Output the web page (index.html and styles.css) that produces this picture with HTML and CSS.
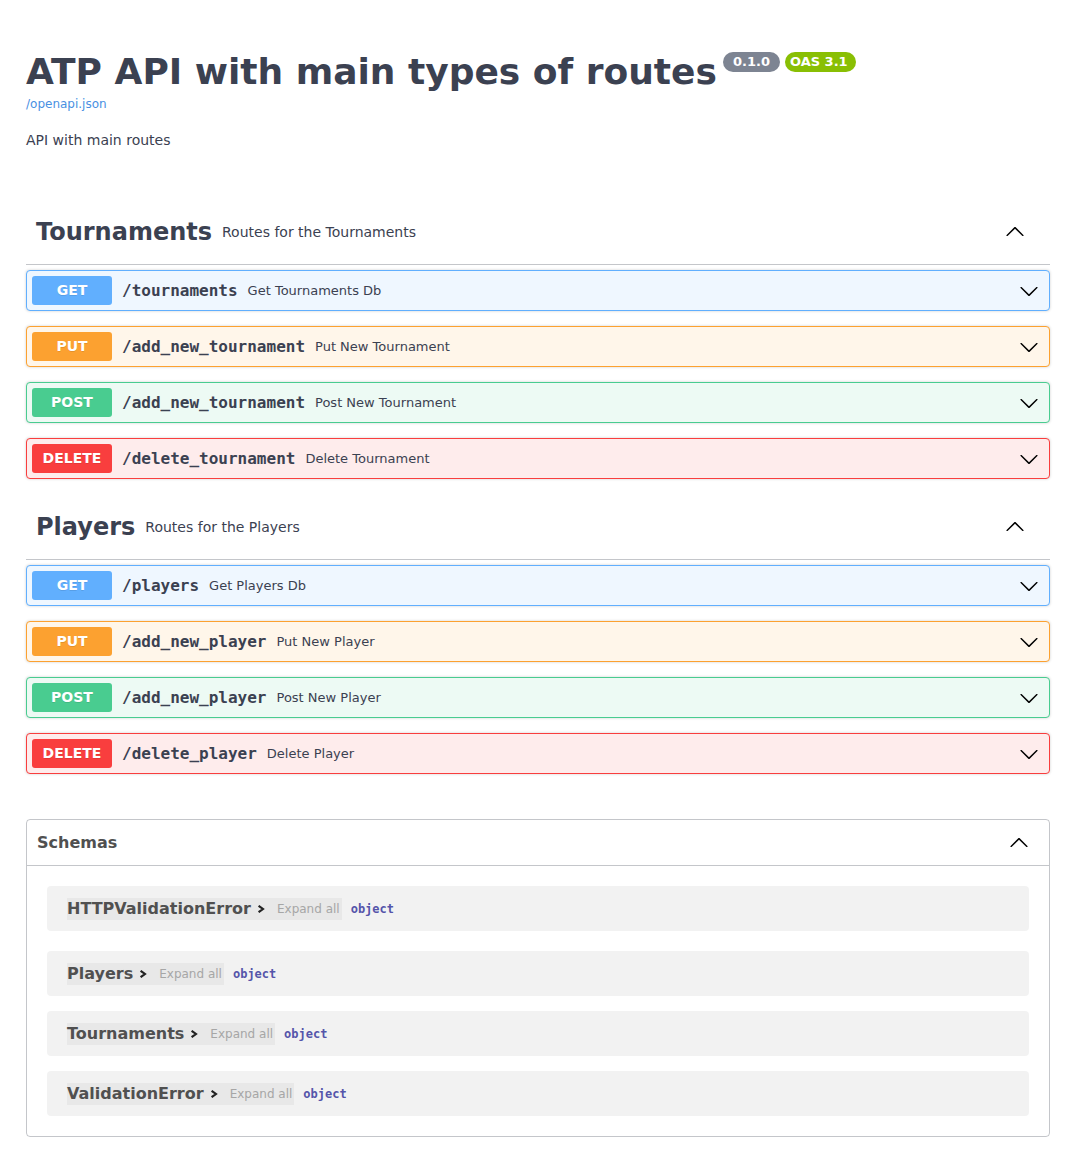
FILE: index.html
```html
<!DOCTYPE html>
<html lang="en">
<head>
<meta charset="utf-8">
<title>ATP API with main types of routes</title>
<link rel="stylesheet" href="styles.css">
</head>
<body>
<svg width="0" height="0" class="defs" aria-hidden="true">
  <defs>
    <symbol id="arrow-down" viewBox="0 0 20 20"><path d="M17.418 6.109c.272-.268.709-.268.979 0s.271.701 0 .969l-7.908 7.83c-.27.268-.707.268-.979 0l-7.908-7.83c-.27-.268-.27-.701 0-.969.271-.268.709-.268.979 0L10 13.25l7.418-7.141z"/></symbol>
    <symbol id="arrow-up" viewBox="0 0 20 20"><path transform="rotate(180 10 10)" d="M17.418 6.109c.272-.268.709-.268.979 0s.271.701 0 .969l-7.908 7.83c-.27.268-.707.268-.979 0l-7.908-7.83c-.27-.268-.27-.701 0-.969.271-.268.709-.268.979 0L10 13.25l7.418-7.141z"/></symbol>
    <symbol id="arrow-right" viewBox="0 0 8 8"><polyline points="1.6,0.8 6,4 1.6,7.2" fill="none" stroke="currentColor" stroke-width="2.1"/></symbol>
  </defs>
</svg>
<div class="wrapper">
  <div class="info">
    <h2 class="title">ATP API with main types of routes<span class="badge badge-version">0.1.0</span><span class="badge badge-oas">OAS 3.1</span></h2>
    <a class="spec-link" href="#">/openapi.json</a>
    <p class="description">API with main routes</p>
  </div>

  <section class="tag-section">
    <div class="tag">
      <h3 class="tag-name">Tournaments</h3>
      <small class="tag-desc">Routes for the Tournaments</small>
      <svg class="tag-arrow"><use href="#arrow-up"/></svg>
    </div>
    <div class="opblock op-get"><span class="method">GET</span><span class="path">/tournaments</span><span class="summary">Get Tournaments Db</span><svg class="op-arrow"><use href="#arrow-down"/></svg></div>
    <div class="opblock op-put"><span class="method">PUT</span><span class="path">/add_new_tournament</span><span class="summary">Put New Tournament</span><svg class="op-arrow"><use href="#arrow-down"/></svg></div>
    <div class="opblock op-post"><span class="method">POST</span><span class="path">/add_new_tournament</span><span class="summary">Post New Tournament</span><svg class="op-arrow"><use href="#arrow-down"/></svg></div>
    <div class="opblock op-delete"><span class="method">DELETE</span><span class="path">/delete_tournament</span><span class="summary">Delete Tournament</span><svg class="op-arrow"><use href="#arrow-down"/></svg></div>
  </section>

  <section class="tag-section">
    <div class="tag">
      <h3 class="tag-name">Players</h3>
      <small class="tag-desc">Routes for the Players</small>
      <svg class="tag-arrow"><use href="#arrow-up"/></svg>
    </div>
    <div class="opblock op-get"><span class="method">GET</span><span class="path">/players</span><span class="summary">Get Players Db</span><svg class="op-arrow"><use href="#arrow-down"/></svg></div>
    <div class="opblock op-put"><span class="method">PUT</span><span class="path">/add_new_player</span><span class="summary">Put New Player</span><svg class="op-arrow"><use href="#arrow-down"/></svg></div>
    <div class="opblock op-post"><span class="method">POST</span><span class="path">/add_new_player</span><span class="summary">Post New Player</span><svg class="op-arrow"><use href="#arrow-down"/></svg></div>
    <div class="opblock op-delete"><span class="method">DELETE</span><span class="path">/delete_player</span><span class="summary">Delete Player</span><svg class="op-arrow"><use href="#arrow-down"/></svg></div>
  </section>

  <section class="models">
    <div class="models-head">
      <h4 class="models-title">Schemas</h4>
      <svg class="models-arrow"><use href="#arrow-up"/></svg>
    </div>
    <div class="model-list">
      <div class="model-container">
        <span class="model-title">HTTPValidationError<svg class="model-arrow"><use href="#arrow-right"/></svg></span><span class="expand-all">Expand all</span><span class="prop-type">object</span>
      </div>
      <div class="model-container">
        <span class="model-title">Players<svg class="model-arrow"><use href="#arrow-right"/></svg></span><span class="expand-all">Expand all</span><span class="prop-type">object</span>
      </div>
      <div class="model-container">
        <span class="model-title">Tournaments<svg class="model-arrow"><use href="#arrow-right"/></svg></span><span class="expand-all">Expand all</span><span class="prop-type">object</span>
      </div>
      <div class="model-container">
        <span class="model-title">ValidationError<svg class="model-arrow"><use href="#arrow-right"/></svg></span><span class="expand-all">Expand all</span><span class="prop-type">object</span>
      </div>
    </div>
  </section>
</div>
</body>
</html>
```

FILE: styles.css
```css
* { box-sizing: border-box; }

body {
  margin: 0;
  font-family: "DejaVu Sans", sans-serif;
  color: #3b4151;
  background: #fff;
}

.defs { position: absolute; width: 0; height: 0; overflow: hidden; }

.wrapper {
  padding: 0 27px 20px 26px;
}

/* info */
.info {
  padding-top: 51px;
  margin-bottom: 51px;
}

.title {
  display: flex;
  align-items: flex-start;
  margin: 0;
  font-size: 36px;
  line-height: 42px;
  font-weight: 700;
  color: #3b4151;
}

.badge {
  display: inline-block;
  margin-top: 1px;
  height: 20px;
  line-height: 20px;
  border-radius: 57px;
  font-size: 13px;
  font-weight: 700;
  color: #fff;
  white-space: nowrap;
}

.badge-version {
  margin-left: 6px;
  padding: 0 10px;
  background: #7d8492;
}

.badge-oas {
  margin-left: 5px;
  padding: 0 8px 0 5px;
  background: #89bf04;
}

.spec-link {
  display: block;
  margin-top: 4px;
  font-size: 12px;
  line-height: 14px;
  color: #4990e2;
  text-decoration: none;
}

.description {
  margin: 21px 0 0;
  font-size: 14px;
  line-height: 16px;
}

/* tags */
.tag-section {
  display: flex;
  flex-direction: column;
}

.tag {
  display: flex;
  align-items: center;
  height: 66px;
  padding: 0 0 0 10px;
  margin-bottom: 5px;
  border-bottom: 1px solid rgba(59, 65, 81, .3);
}

.tag-name {
  margin: 0;
  font-size: 24px;
  font-weight: 700;
  line-height: 28px;
}

.tag-desc {
  flex: 1;
  padding: 0 10px;
  font-size: 14px;
}

.tag-arrow {
  width: 20px;
  height: 20px;
  margin-right: 25px;
  fill: #000;
}

/* operations */
.opblock {
  display: flex;
  align-items: center;
  padding: 5px;
  margin-bottom: 15px;
  border: 1px solid;
  border-radius: 4px;
  box-shadow: 0 0 3px rgba(0, 0, 0, .19);
}

.method {
  min-width: 80px;
  padding: 6px 0;
  border-radius: 3px;
  font-size: 14px;
  line-height: 17px;
  font-weight: 700;
  text-align: center;
  color: #fff;
  text-shadow: 0 1px 0 rgba(0, 0, 0, .1);
}

.path {
  padding: 0 10px;
  font-family: "DejaVu Sans Mono", monospace;
  font-size: 16px;
  font-weight: 700;
  color: #3b4151;
}

.summary {
  flex: 1;
  font-size: 13px;
  color: #3b4151;
}

.op-arrow {
  width: 20px;
  height: 20px;
  margin-right: 5px;
  fill: #000;
}

.op-get { background: #eff7ff; border-color: #61affe; }
.op-get .method { background: #61affe; }
.op-put { background: #fff6ea; border-color: #fca130; }
.op-put .method { background: #fca130; }
.op-post { background: #edfaf4; border-color: #49cc90; }
.op-post .method { background: #49cc90; }
.op-delete { background: #feecec; border-color: #f93e3e; }
.op-delete .method { background: #f93e3e; }

/* schemas */
.models {
  margin-top: 30px;
  border: 1px solid rgba(59, 65, 81, .3);
  border-radius: 4px;
}

.models-head {
  display: flex;
  align-items: center;
  height: 46px;
  padding: 0 20px 0 10px;
  border-bottom: 1px solid rgba(59, 65, 81, .3);
}

.models-title {
  flex: 1;
  margin: 0;
  font-size: 16px;
  font-weight: 700;
  color: #505050;
}

.models-arrow {
  width: 20px;
  height: 20px;
  fill: #000;
}

.model-list {
  display: flex;
  flex-direction: column;
  gap: 15px;
  padding: 20px 20px 20px;
}

.model-container {
  display: flex;
  align-items: center;
  height: 45px;
  padding: 0 20px;
  border-radius: 4px;
  background: rgba(0, 0, 0, .05);
}

.model-container:first-child { margin-bottom: 5px; }

.model-title {
  display: flex;
  align-items: center;
  height: 22px;
  font-size: 16px;
  font-weight: 700;
  color: #505050;
  background: rgba(0, 0, 0, .04);
}

.model-arrow {
  width: 8px;
  height: 8px;
  margin: 1px 8px 0 6px;
  color: #222;
}

.expand-all {
  height: 22px;
  line-height: 22px;
  padding: 0 2px 0 4px;
  font-size: 12px;
  color: #a6a6a6;
  background: rgba(0, 0, 0, .04);
}

.prop-type {
  margin-left: 9px;
  font-family: "DejaVu Sans Mono", monospace;
  font-size: 12px;
  font-weight: 700;
  color: #55a;
}
```
